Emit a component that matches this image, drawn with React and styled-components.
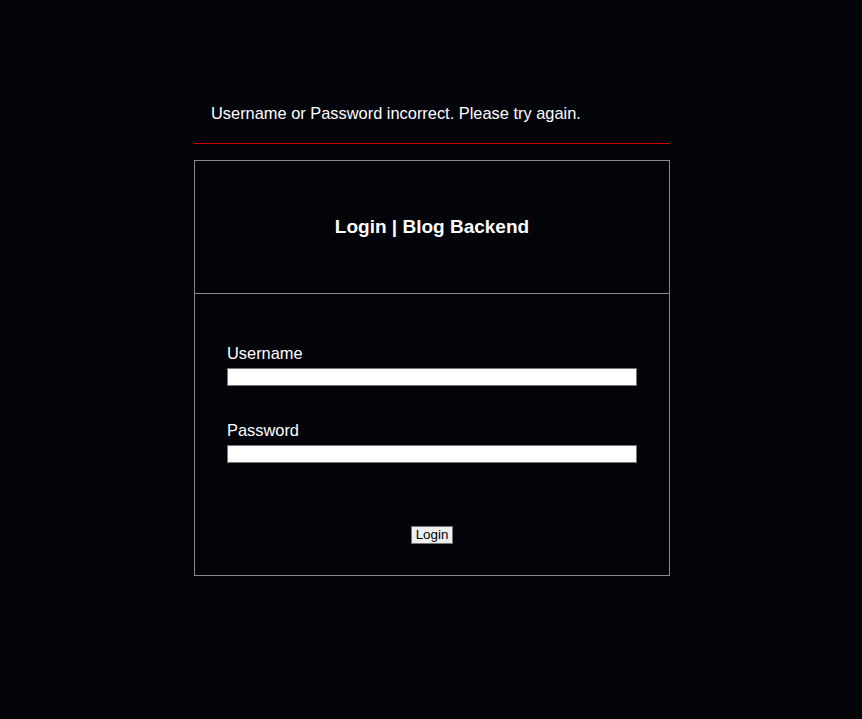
import React from "react";
import styled, { createGlobalStyle } from "styled-components";

const GlobalStyle = createGlobalStyle`
  html, body {
    margin: 0;
    background-color: #03040a;
    color: #ffffff;
    font-family: "Liberation Sans", Arial, sans-serif;
  }
`;

const Page = styled.div`
  box-sizing: border-box;
  width: 478px;
  margin: 0 auto;
  padding: 104px 0 0 2px;
`;

const Message = styled.div`
  font-size: 16.4px;
  line-height: 18px;
  padding: 0 17px;
`;

const Rule = styled.hr`
  border: none;
  height: 1px;
  background-color: #d40000;
  margin: 21px 0 16px 0;
`;

const StyledCard = styled.div`
  border: 1px solid #8a8a8a;
`;

const StyledHeader = styled.div`
  height: 132px;
  display: flex;
  align-items: center;
  justify-content: center;
  border-bottom: 1px solid #8a8a8a;
`;

const StyledTitle = styled.h2`
  margin: 0;
  font-size: 19px;
  font-weight: bold;
`;

const StyledForm = styled.form`
  padding: 50px 32px 30px 32px;
  display: flex;
  flex-direction: column;
`;

const StyledField = styled.div`
  margin-bottom: ${props => (props.last ? "63px" : "35px")};
`;

const StyledLabel = styled.label`
  display: block;
  font-size: 16.4px;
  line-height: 18px;
  margin-bottom: 6px;
`;

const StyledInput = styled.input`
  display: block;
  box-sizing: border-box;
  width: 100%;
  height: 18px;
  margin: 0;
  padding: 0 2px;
  border: 1px solid #767676;
  background-color: #ffffff;
  outline: none;
`;

const ButtonDiv = styled.div`
  display: flex;
  justify-content: center;
  margin-bottom: 1px;
`;

const StyledButton = styled.button`
  box-sizing: border-box;
  height: 18px;
  padding: 0 4px;
  border: 1px solid #767676;
  background-color: #efefef;
  color: #000000;
  font-family: "Liberation Sans", Arial, sans-serif;
  font-size: 13.33px;
  line-height: 14px;
`;

function App() {
  return (
    <>
      <GlobalStyle />
      <Page>
        <Message>Username or Password incorrect. Please try again.</Message>
        <Rule />
        <StyledCard>
          <StyledHeader>
            <StyledTitle>Login | Blog Backend</StyledTitle>
          </StyledHeader>
          <StyledForm onSubmit={e => e.preventDefault()}>
            <StyledField>
              <StyledLabel htmlFor="username">Username</StyledLabel>
              <StyledInput id="username" type="text" />
            </StyledField>
            <StyledField last>
              <StyledLabel htmlFor="password">Password</StyledLabel>
              <StyledInput id="password" type="password" />
            </StyledField>
            <ButtonDiv>
              <StyledButton type="submit">Login</StyledButton>
            </ButtonDiv>
          </StyledForm>
        </StyledCard>
      </Page>
    </>
  );
}

export default App;
